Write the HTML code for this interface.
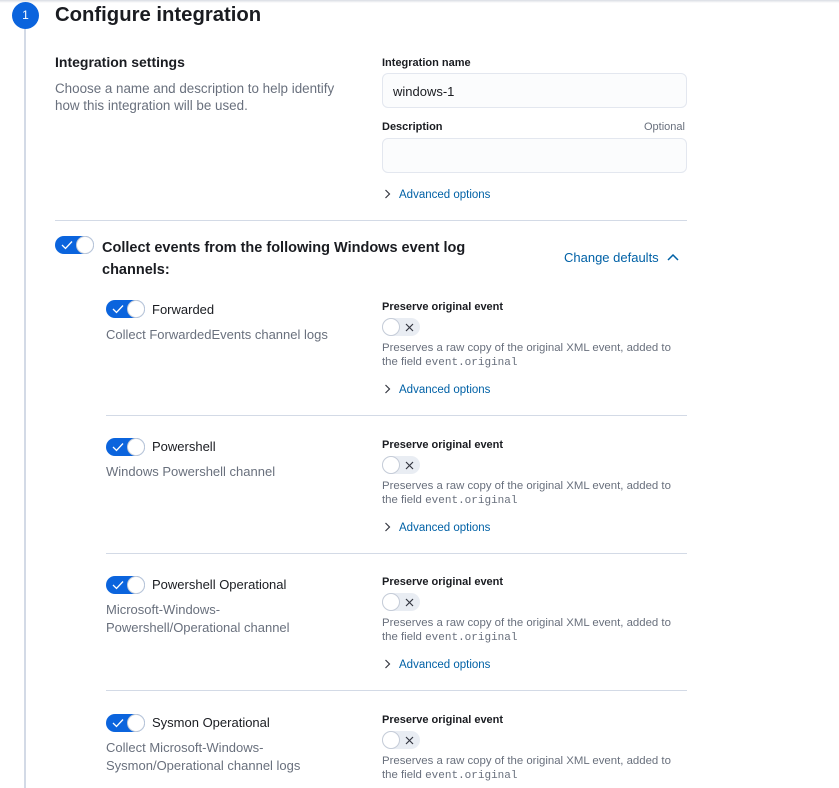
<!DOCTYPE html>
<html><head><meta charset="utf-8"><style>
*{margin:0;padding:0;box-sizing:border-box}
body{width:839px;height:777px;overflow:hidden;background:#fff;font-family:"Liberation Sans",Arial,sans-serif;color:#1a1c21;position:relative}
.a{position:absolute;white-space:nowrap}
.gray{color:#69707d}
.blue{color:#0061a6}
.lbl{font-size:11px;font-weight:bold;color:#1a1c21}
.inp{position:absolute;left:382px;width:305px;height:35px;background:#fbfcfd;border:1px solid #e3e7ef;border-radius:6px;font-size:13px;padding:10px 10px}
.hr{position:absolute;height:1px;background:#d3dae6}
.ton{position:absolute;width:39px;height:18px;border-radius:9px;background:#0b64dd}
.ton .k{position:absolute;right:0;top:0;width:18px;height:18px;border-radius:50%;background:#fff;border:1px solid #c5ccd8}
.ton svg{position:absolute;left:6px;top:4px}
.toff{position:absolute;width:38px;height:18px;border-radius:9px;background:#e9edf3}
.toff .k{position:absolute;left:0;top:0;width:18px;height:18px;border-radius:50%;background:#fff;border:1px solid #c5ccd8}
.toff svg{position:absolute;left:23px;top:5px}
.adv{font-size:11.5px;color:#0061a6}
.adv svg{margin-right:8px;vertical-align:-1px}
.mono{font-family:"Liberation Mono",monospace;font-size:11px}
.pd{font-size:11.4px;line-height:14px}
</style></head><body>
<div class="a" style="left:0;top:0;width:839px;height:3px;background:linear-gradient(#d8dce3,#fff)"></div>
<div class="a" style="left:24px;top:28px;width:2px;height:760px;background:#d3dae6"></div>
<div class="a" style="left:12px;top:2px;width:27px;height:27px;border-radius:50%;background:#0b64dd;color:#fff;font-size:12px;text-align:center;line-height:27px">1</div>
<div class="a" style="left:55px;top:3px;font-size:20.3px;font-weight:bold;line-height:24px">Configure integration</div>

<div class="a" style="left:55px;top:54px;font-size:14px;font-weight:bold">Integration settings</div>
<div class="a gray" style="left:55px;top:80px;font-size:13.4px;line-height:17px">Choose a name and description to help identify<br>how this integration will be used.</div>

<div class="a lbl" style="left:382px;top:57px">Integration name</div>
<div class="inp" style="top:73px">windows-1</div>
<div class="a lbl" style="left:382px;top:121px">Description</div>
<div class="a gray" style="left:644px;top:121px;font-size:11px">Optional</div>
<div class="inp" style="top:138px"></div>
<div class="a adv" style="left:384px;top:189px"><svg width="7" height="10"><path d="M1.5 1l4 4-4 4" stroke="#343741" stroke-width="1.2" fill="none"/></svg>Advanced options</div>
<div class="hr" style="left:55px;top:220px;width:632px"></div>

<div class="ton" style="left:55px;top:236px"><svg width="12" height="10"><path d="M1 5l3.5 3.5L11 1.5" stroke="#fff" stroke-width="1.3" fill="none"/></svg><div class="k"></div></div>
<div class="a" style="left:102px;top:237px;font-size:14.5px;font-weight:bold;line-height:22px">Collect events from the following Windows event log<br>channels:</div>
<div class="a blue" style="left:564px;top:250px;font-size:13px">Change defaults <svg width="14" height="10" style="margin-left:4px"><path d="M2 8l5-5 5 5" stroke="#0061a6" stroke-width="1.5" fill="none"/></svg></div>

<div class="a" style="left:0;top:0;width:839px">
 <div class="ton" style="left:106px;top:300px"><svg width="12" height="10"><path d="M1 5l3.5 3.5L11 1.5" stroke="#fff" stroke-width="1.3" fill="none"/></svg><div class="k"></div></div>
 <div class="a" style="left:152px;top:302px;font-size:13px">Forwarded</div>
 <div class="a gray" style="left:106px;top:326px;font-size:13px;line-height:18px">Collect ForwardedEvents channel logs</div>
</div>
<div class="a" style="left:0;top:138px;width:839px">
 <div class="ton" style="left:106px;top:300px"><svg width="12" height="10"><path d="M1 5l3.5 3.5L11 1.5" stroke="#fff" stroke-width="1.3" fill="none"/></svg><div class="k"></div></div>
 <div class="a" style="left:152px;top:301px;font-size:13px">Powershell</div>
 <div class="a gray" style="left:106px;top:325px;font-size:13px;line-height:18px">Windows Powershell channel</div>
</div>
<div class="a" style="left:0;top:276px;width:839px">
 <div class="ton" style="left:106px;top:300px"><svg width="12" height="10"><path d="M1 5l3.5 3.5L11 1.5" stroke="#fff" stroke-width="1.3" fill="none"/></svg><div class="k"></div></div>
 <div class="a" style="left:152px;top:301px;font-size:13px">Powershell Operational</div>
 <div class="a gray" style="left:106px;top:325px;font-size:13px;line-height:18px">Microsoft-Windows-<br>Powershell/Operational channel</div>
</div>
<div class="a" style="left:0;top:414px;width:839px">
 <div class="ton" style="left:106px;top:300px"><svg width="12" height="10"><path d="M1 5l3.5 3.5L11 1.5" stroke="#fff" stroke-width="1.3" fill="none"/></svg><div class="k"></div></div>
 <div class="a" style="left:152px;top:301px;font-size:13px">Sysmon Operational</div>
 <div class="a gray" style="left:106px;top:325px;font-size:13px;line-height:18px">Collect Microsoft-Windows-<br>Sysmon/Operational channel logs</div>
</div>

<div class="a" style="left:0;top:0;width:839px">
 <div class="a lbl" style="left:382px;top:301px">Preserve original event</div>
 <div class="toff" style="left:382px;top:318px"><div class="k"></div><svg width="9" height="9"><path d="M1 1l7 7M8 1l-7 7" stroke="#343741" stroke-width="1.2"/></svg></div>
 <div class="a gray pd" style="left:382px;top:341px">Preserves a raw copy of the original XML event, added to<br>the field <span class="mono">event.original</span></div>
 <div class="a adv" style="left:384px;top:384px"><svg width="7" height="10"><path d="M1.5 1l4 4-4 4" stroke="#343741" stroke-width="1.2" fill="none"/></svg>Advanced options</div>
 <div class="hr" style="left:106px;top:415px;width:581px"></div>
</div>
<div class="a" style="left:0;top:138px;width:839px">
 <div class="a lbl" style="left:382px;top:301px">Preserve original event</div>
 <div class="toff" style="left:382px;top:318px"><div class="k"></div><svg width="9" height="9"><path d="M1 1l7 7M8 1l-7 7" stroke="#343741" stroke-width="1.2"/></svg></div>
 <div class="a gray pd" style="left:382px;top:341px">Preserves a raw copy of the original XML event, added to<br>the field <span class="mono">event.original</span></div>
 <div class="a adv" style="left:384px;top:384px"><svg width="7" height="10"><path d="M1.5 1l4 4-4 4" stroke="#343741" stroke-width="1.2" fill="none"/></svg>Advanced options</div>
 <div class="hr" style="left:106px;top:415px;width:581px"></div>
</div>
<div class="a" style="left:0;top:275px;width:839px">
 <div class="a lbl" style="left:382px;top:301px">Preserve original event</div>
 <div class="toff" style="left:382px;top:318px"><div class="k"></div><svg width="9" height="9"><path d="M1 1l7 7M8 1l-7 7" stroke="#343741" stroke-width="1.2"/></svg></div>
 <div class="a gray pd" style="left:382px;top:341px">Preserves a raw copy of the original XML event, added to<br>the field <span class="mono">event.original</span></div>
 <div class="a adv" style="left:384px;top:384px"><svg width="7" height="10"><path d="M1.5 1l4 4-4 4" stroke="#343741" stroke-width="1.2" fill="none"/></svg>Advanced options</div>
 <div class="hr" style="left:106px;top:415px;width:581px"></div>
</div>
<div class="a" style="left:0;top:413px;width:839px">
 <div class="a lbl" style="left:382px;top:301px">Preserve original event</div>
 <div class="toff" style="left:382px;top:318px"><div class="k"></div><svg width="9" height="9"><path d="M1 1l7 7M8 1l-7 7" stroke="#343741" stroke-width="1.2"/></svg></div>
 <div class="a gray pd" style="left:382px;top:341px">Preserves a raw copy of the original XML event, added to<br>the field <span class="mono">event.original</span></div>
</div>
</body></html>
